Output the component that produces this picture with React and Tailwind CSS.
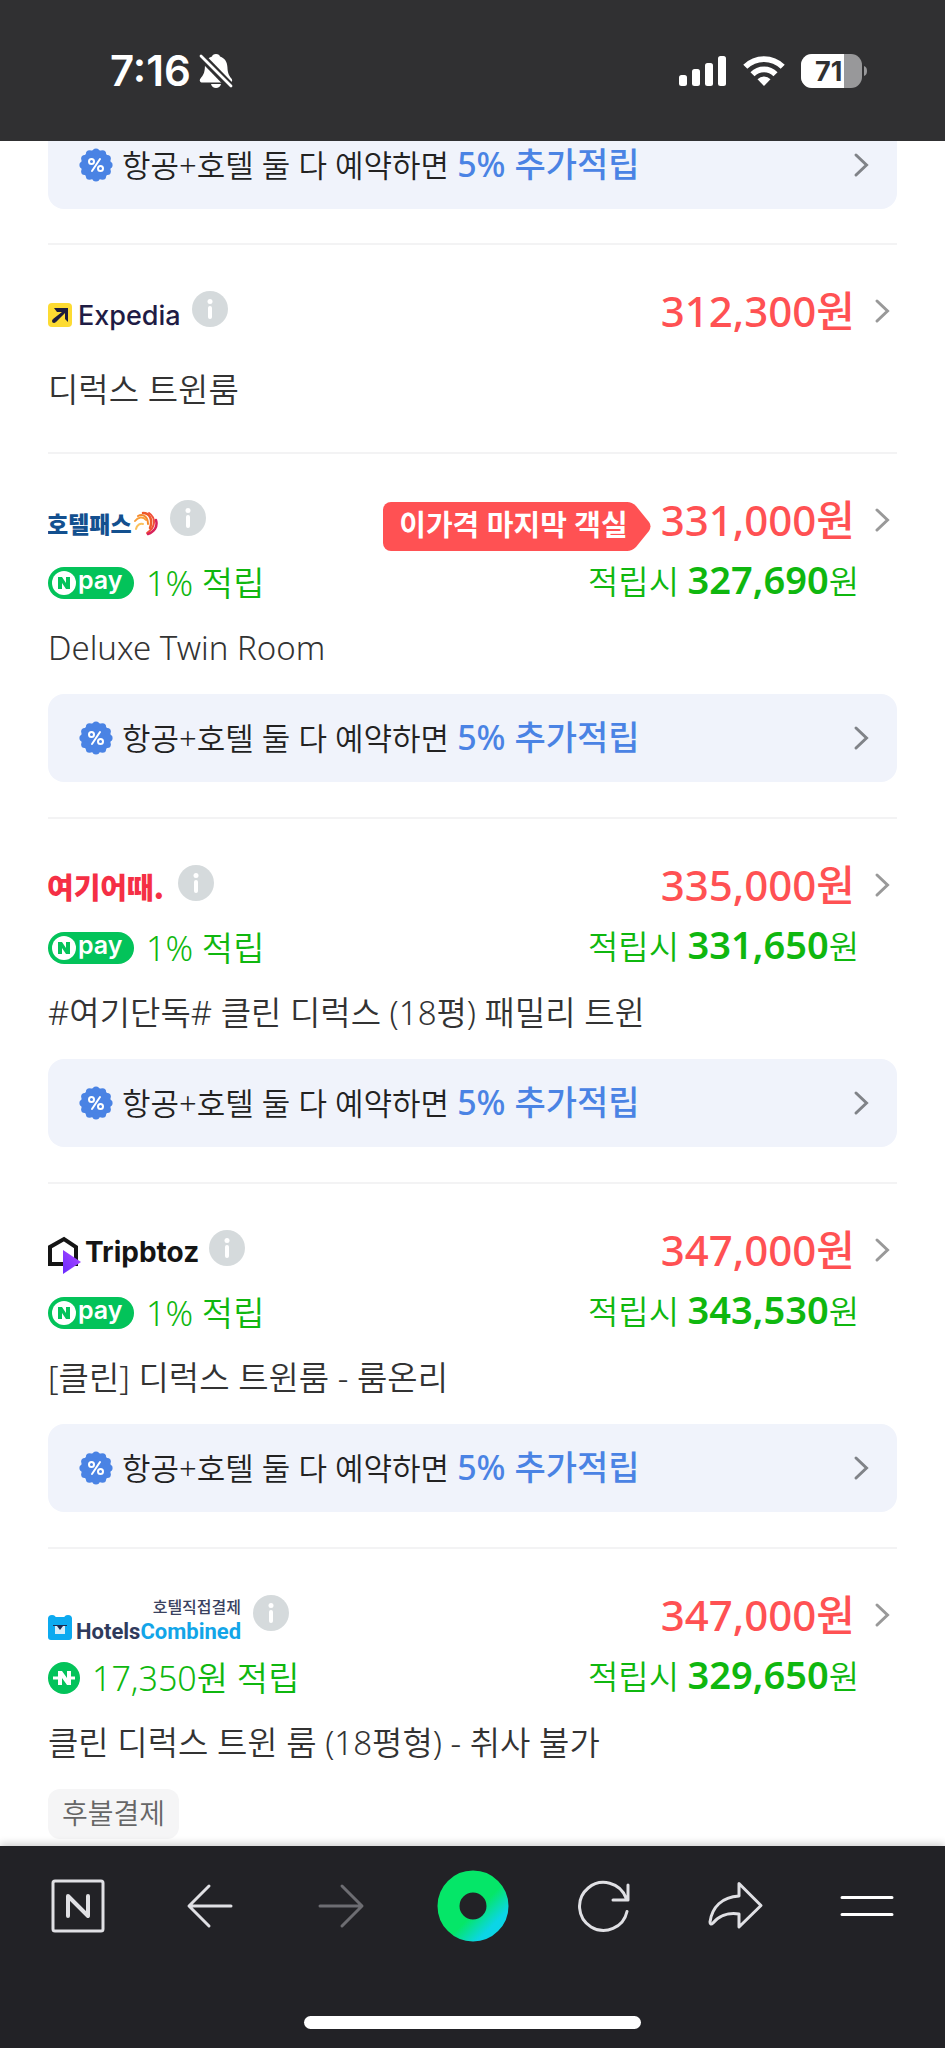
const offers = [
  {
    id: 'expedia',
    name: 'Expedia',
    logo: ExpediaLogo,
    price: '312,300',
    room: '디럭스 트윈룸',
  },
  {
    id: 'hotelpass',
    name: '호텔패스',
    logo: HotelpassLogo,
    price: '331,000',
    badge: '이가격 마지막 객실',
    reward: '1% 적립',
    rewardPrice: '327,690',
    room: 'Deluxe Twin Room',
    promo: true,
  },
  {
    id: 'yeogi',
    name: '여기어때',
    logo: YeogiLogo,
    price: '335,000',
    reward: '1% 적립',
    rewardPrice: '331,650',
    room: '#여기단독# 클린 디럭스 (18평) 패밀리 트윈',
    promo: true,
  },
  {
    id: 'tripbtoz',
    name: 'Tripbtoz',
    logo: TripbtozLogo,
    price: '347,000',
    reward: '1% 적립',
    rewardPrice: '343,530',
    room: '[클린] 디럭스 트윈룸 - 룸온리',
    promo: true,
  },
  {
    id: 'hotelscombined',
    name: 'HotelsCombined',
    logo: HotelsCombinedLogo,
    price: '347,000',
    reward: '17,350원 적립',
    rewardIcon: 'coin',
    rewardPrice: '329,650',
    room: '클린 디럭스 트윈 룸 (18평형) - 취사 불가',
    tag: '후불결제',
  },
];

function ExpediaLogo() {
  return (
    <svg width="132" height="60" viewBox="0 0 132 60" role="img" aria-label="Expedia">
      <rect x="0" y="22" width="24" height="24" rx="4" fill="#fddb32" />
      <path d="M6 27h14v14l-3-3v-6L8 41l-3-3 9-7H9z" fill="#1c1c3c" />
      <circle cx="6" cy="40" r="2" fill="#1c1c3c" />
      <text x="30" y="44" fontFamily="Inter, sans-serif" fontSize="27" fontWeight="500" fill="#1f1c45">
        Expedia
      </text>
    </svg>
  );
}

function HotelpassLogo() {
  return (
    <svg width="110" height="60" viewBox="0 0 110 60" role="img" aria-label="호텔패스">
      <text x="-1" y="43" fontFamily="'Noto Sans CJK KR', sans-serif" fontSize="23" fontWeight="900" fill="#13508f">
        호텔패스
      </text>
      <g fill="none" strokeLinecap="round">
        <path d="M87 31c3-4 8-5 11-1" stroke="#f9a03c" strokeWidth="2" />
        <path d="M90 26c5-3 10 1 10 8" stroke="#f58a2c" strokeWidth="2" />
        <path d="M95 23c7 0 10 7 7 15" stroke="#ee5a2a" strokeWidth="2.5" />
        <path d="M88 39c1-4 4-6 7-5" stroke="#fbc15b" strokeWidth="2" />
        <path d="M101 23c7 5 7 14-2 20" stroke="#f0503a" strokeWidth="2" />
        <path d="M108 30c2 7-2 12-8 14" stroke="#d8235a" strokeWidth="2.5" />
      </g>
    </svg>
  );
}

function YeogiLogo() {
  return (
    <svg width="118" height="60" viewBox="0 0 118 60" role="img" aria-label="여기어때">
      <text
        x="-1"
        y="44"
        fontFamily="'Noto Sans CJK KR', sans-serif"
        fontSize="29"
        fontWeight="900"
        fill="#f52f45"
      >
        여기어때.
      </text>
    </svg>
  );
}

function TripbtozLogo() {
  return (
    <svg width="149" height="60" viewBox="0 0 149 60" className="overflow-visible" role="img" aria-label="Tripbtoz">
      <defs>
        <linearGradient id="tripPlay" x1="0" y1="1" x2="1" y2="0">
          <stop offset="0" stopColor="#6a2bff" />
          <stop offset="1" stopColor="#b04bff" />
        </linearGradient>
      </defs>
      <path d="M2 44V27L16 19l12 8v17z" fill="none" stroke="#151515" strokeWidth="4" strokeLinejoin="miter" />
      <path d="M15 30l18 12-18 12z" fill="url(#tripPlay)" />
      <text x="37" y="42" fontFamily="Inter, sans-serif" fontSize="28" fontWeight="700" fill="#151515">
        Tripbtoz
      </text>
    </svg>
  );
}

function HotelsCombinedLogo() {
  return (
    <svg width="193" height="60" viewBox="0 0 193 60" role="img" aria-label="HotelsCombined 호텔직접결제">
      <text
        x="193"
        y="28"
        textAnchor="end"
        fontFamily="'Noto Sans CJK KR', sans-serif"
        fontSize="16"
        fontWeight="500"
        fill="#3a4260"
      >
        호텔직접결제
      </text>
      <circle cx="4" cy="34" r="4" fill="#0caaf0" />
      <circle cx="20" cy="34" r="4" fill="#0caaf0" />
      <rect x="0" y="32" width="24" height="23" rx="3" fill="#0caaf0" />
      <path d="M7 41h10v8H7z" fill="#d8eefa" />
      <path d="M5 40h14v1h-4l-3 4-3-4H5z" fill="#1c2b52" />
      <text x="28" y="54" fontFamily="Roboto, sans-serif" fontSize="22" fontWeight="700" fill="#2f3a5c">
        Hotels<tspan fill="#12a5e8">Combined</tspan>
      </text>
    </svg>
  );
}

function NpayBadge() {
  return (
    <svg width="86" height="32" viewBox="0 0 86 32" className="overflow-visible" role="img" aria-label="N pay">
      <rect width="86" height="32" rx="16" fill="#03c35a" />
      <circle cx="16" cy="16" r="12" fill="#fff" />
      <path d="M10 22V10h4l4 6v-6h4v12h-4l-4-6v6z" fill="#03c35a" />
      <text x="30" y="22" fontFamily="Inter, sans-serif" fontSize="25" fontWeight="600" fill="#fff">
        pay
      </text>
    </svg>
  );
}

function PointCoin() {
  return (
    <svg width="32" height="32" viewBox="0 0 32 32" aria-hidden="true">
      <circle cx="16" cy="16" r="16" fill="#03c35a" />
      <path d="M10 23V9h4l5 7V9h4v14h-4l-5-7v7z" fill="#fff" />
      <path d="M5 16h6M21 16h6" stroke="#fff" strokeWidth="3" />
    </svg>
  );
}

function Chevron({ className }) {
  return (
    <svg className={className} width="28" height="28" viewBox="0 0 28 28" fill="none" aria-hidden="true">
      <path d="M8 4l10.500 10L8 24" stroke="currentColor" strokeWidth="3" strokeLinecap="round" />
    </svg>
  );
}

function InfoButton({ name }) {
  return (
    <button type="button" aria-label={`${name} 정보`} className="mt-2.5 size-9 shrink-0">
      <svg width="36" height="36" viewBox="0 0 36 36">
        <circle cx="18" cy="18" r="18" fill="#d5dadc" />
        <circle cx="18" cy="10.500" r="2.500" fill="#fff" />
        <path d="M18 17v9" stroke="#fff" strokeWidth="4" strokeLinecap="round" />
      </svg>
    </button>
  );
}

// Scalloped disc: 12 small bumps set round a circle
function PercentSeal() {
  const bumps = Array.from({ length: 12 }, (_, i) => (i * Math.PI) / 6);
  return (
    <svg width="34" height="34" viewBox="0 0 34 34" className="shrink-0" aria-hidden="true">
      <g fill="#4a83e4">
        <circle cx="17" cy="17" r="15" />
        {bumps.map((a) => (
          <circle key={a} cx={17 + 13 * Math.cos(a)} cy={17 + 13 * Math.sin(a)} r="3.600" />
        ))}
      </g>
      <g fill="none" stroke="#fff" strokeWidth="2">
        <circle cx="12.500" cy="13.500" r="2.500" />
        <circle cx="21.500" cy="20.500" r="2.500" />
        <path d="M21 11l-8 12" strokeLinecap="round" />
      </g>
    </svg>
  );
}

function PromoBanner() {
  return (
    <a href="#promo" className="flex h-[88px] items-center rounded-2xl bg-[#f0f3fb] pl-[31px] pr-[21px]">
      <PercentSeal />
      <span className="ml-[9px] whitespace-nowrap pb-0.5 text-[31px] font-[350] leading-10 text-[#222]">
        항공+호텔 둘 다 예약하면{' '}
        <strong className="text-[34px] font-medium text-[#4a83e4]">5% 추가적립</strong>
      </span>
      <Chevron className="ml-auto shrink-0 text-[#808388]" />
    </a>
  );
}

function LastRoomBadge({ children }) {
  return (
    <span className="mt-3 flex h-[49px] items-center">
      <span className="h-full rounded-l-lg bg-[#ff5153] pl-4 text-[29px] font-bold leading-[46px] text-white">
        {children}
      </span>
      <svg width="24" height="49" viewBox="0 0 24 49" className="-ml-px" aria-hidden="true">
        <path d="M0 0q5 0 9 4l13 16q3 4 0 9L9 45q-4 4-9 4z" fill="#ff5153" />
      </svg>
    </span>
  );
}

function Offer({ offer }) {
  const Logo = offer.logo;
  return (
    <article className={offer.tag ? 'pt-9 pb-[7px]' : 'border-b-2 border-[#f3f3f4] pt-9 pb-[35px]'}>
      <div className="flex h-[60px] justify-between">
        <div className="flex items-start gap-3">
          <Logo />
          <InfoButton name={offer.name} />
        </div>
        <a href={`#${offer.id}`} className="flex items-center">
          {offer.badge && <LastRoomBadge>{offer.badge}</LastRoomBadge>}
          <span className="ml-2.5 text-[42px] font-medium leading-[60px] text-[#ff5153]">{offer.price}원</span>
          <Chevron className="ml-3.5 text-[#999]" />
        </a>
      </div>

      {offer.reward && (
        <div className="mt-1 flex h-[52px] items-center justify-between text-[#0fb70f]">
          <p className="flex items-center gap-3 pt-1.5 text-[34px] font-[350] leading-[46px]">
            {offer.rewardIcon === 'coin' ? <PointCoin /> : <NpayBadge />}
            {offer.reward}
          </p>
          <p className="pr-[38px] text-[33px] font-[350] leading-[52px]">
            적립시 <strong className="text-[38px] font-semibold">{offer.rewardPrice}</strong>원
          </p>
        </div>
      )}

      <h2
        className={
          offer.reward
            ? 'mt-[18px] text-[33px] font-[350] leading-[48px] text-[#333]'
            : 'mt-[25px] mb-[3px] text-[33px] font-[350] leading-[48px] text-[#333]'
        }
      >
        {offer.room}
      </h2>

      {offer.promo && (
        <div className="mt-[22px]">
          <PromoBanner />
        </div>
      )}
      {offer.tag && (
        <div className="mt-[22px] flex">
          <span className="h-[50px] rounded-xl bg-[#f5f5f6] px-[14px] text-[28px] font-[350] leading-[48px] text-[#666]">
            {offer.tag}
          </span>
        </div>
      )}
    </article>
  );
}

function StatusBar() {
  return (
    <header className="flex h-[141px] shrink-0 items-center justify-between bg-[#303032] pl-[110px] pr-[77px] text-white">
      <div className="flex items-center gap-2">
        <time className="font-[Inter,sans-serif] text-[42px] font-semibold leading-[48px]">7:16</time>
        <svg width="34" height="36" viewBox="0 0 34 36" aria-label="무음">
          <path
            d="M17 1c2.500 0 3.600 1.200 4 2.600 5 1.600 7.200 5.600 7.400 10.400.2 6 1.600 8.500 4 11.500 1.600 2.300.6 4-2 4H3.500c-2.600 0-3.500-1.800-2-4 2.600-3.300 4.200-5.500 4.400-11.500C6 9 8.300 5.200 13 3.600 13.400 2.200 14.500 1 17 1z"
            fill="currentColor"
          />
          <path d="M12 31h10c-.6 2.600-2.600 4-5 4s-4.400-1.400-5-4z" fill="currentColor" />
          <path d="M0 1l32 33" stroke="#303032" strokeWidth="8" />
          <path d="M2 3l30 30" stroke="currentColor" strokeWidth="2.800" strokeLinecap="round" />
        </svg>
      </div>
      <div className="flex items-center gap-4">
        <svg width="48" height="32" viewBox="0 0 48 32" fill="currentColor" aria-label="신호">
          <rect x="0" y="20" width="8" height="11" rx="2.500" />
          <rect x="13" y="14" width="8" height="17" rx="2.500" />
          <rect x="26" y="8" width="8" height="23" rx="2.500" />
          <rect x="39" y="1" width="8" height="30" rx="2.500" />
        </svg>
        <svg width="42" height="32" viewBox="0 0 42 32" aria-label="Wi-Fi">
          <g fill="none" stroke="currentColor" strokeWidth="5.800">
            <path d="M2.300 11.800a26.500 26.500 0 0 1 37.400 0" />
            <path d="M9.500 19.200a16.300 16.300 0 0 1 23 0" />
          </g>
          <path d="M14.500 24.300a9.200 9.200 0 0 1 13 0L21 31z" fill="currentColor" />
        </svg>
        <svg width="67" height="34" viewBox="0 0 67 34" aria-label="배터리 71%">
          <defs>
            <clipPath id="batteryBody">
              <rect width="61" height="34" rx="11" />
            </clipPath>
          </defs>
          <g clipPath="url(#batteryBody)">
            <rect width="61" height="34" fill="#98989a" />
            <rect width="43" height="34" fill="#fff" />
          </g>
          <path d="M63 12c4 1 4 9 0 10z" fill="#98989a" />
          <text x="14" y="27" fontFamily="Inter, sans-serif" fontSize="27" fontWeight="700" fill="#303032">
            71
          </text>
        </svg>
      </div>
    </header>
  );
}

function NavButton({ label, disabled, children }) {
  return (
    <button
      type="button"
      aria-label={label}
      disabled={disabled}
      className="flex size-[72px] items-center justify-center text-[#e0e0e4] disabled:text-[#6d6d72]"
    >
      {children}
    </button>
  );
}

function BottomNav() {
  const stroke = {
    width: 56,
    height: 56,
    viewBox: '0 0 56 56',
    fill: 'none',
    stroke: 'currentColor',
    strokeWidth: 3,
    strokeLinecap: 'round',
    strokeLinejoin: 'round',
  };
  return (
    <footer className="relative bg-[#222226] pt-6 pb-[19px] shadow-[0_-2px_8px_rgba(0,0,0,0.2)]">
      <nav className="flex justify-between px-[42px]">
        <NavButton label="네이버 홈">
          <svg {...stroke}>
            <rect x="3" y="3" width="50" height="50" rx="2" />
            <path d="M18 38V18l20 20V18" strokeWidth="4" />
          </svg>
        </NavButton>
        <NavButton label="뒤로">
          <svg {...stroke}>
            <path d="M49 28H8M27 8L7 28l20 20" />
          </svg>
        </NavButton>
        <NavButton label="앞으로" disabled>
          <svg {...stroke}>
            <path d="M7 28h41M29 8l20 20-20 20" />
          </svg>
        </NavButton>
        <NavButton label="그린닷">
          <svg width="72" height="72" viewBox="0 0 72 72">
            <defs>
              <linearGradient id="greenDot" x1="0.100" y1="0.100" x2="0.900" y2="0.900">
                <stop offset="0.600" stopColor="#05e668" />
                <stop offset="1" stopColor="#0bd5e6" />
              </linearGradient>
            </defs>
            <circle cx="36" cy="36" r="24.500" fill="none" stroke="url(#greenDot)" strokeWidth="22" />
          </svg>
        </NavButton>
        <NavButton label="새로고침">
          <svg {...stroke}>
            <path d="M51 33.500A24 24 0 1 1 50 20M52 7v15H37" />
          </svg>
        </NavButton>
        <NavButton label="공유">
          <svg {...stroke}>
            <path d="M31 5.500L53 27.500 31 49V36C19 34 10 39 5 45c-2 2-3 1-3-1C4 29 14 19 31 18z" />
          </svg>
        </NavButton>
        <NavButton label="메뉴">
          <svg {...stroke} stroke="#fff">
            <path d="M3 19.500h50M3 36.500h50" />
          </svg>
        </NavButton>
      </nav>
      <div className="mx-auto mt-[74px] h-[13px] w-[337px] rounded-full bg-white" />
    </footer>
  );
}

export default function App() {
  return (
    <div className="flex min-h-screen flex-col bg-white font-['Noto_Sans','Noto_Sans_CJK_KR',sans-serif]">
      <StatusBar />
      <main className="flex-1 overflow-hidden px-12">
        <div className="-mt-5 border-b-2 border-[#f3f3f4] pb-[34px]">
          <PromoBanner />
        </div>
        {offers.map((offer) => (
          <Offer key={offer.id} offer={offer} />
        ))}
      </main>
      <BottomNav />
    </div>
  );
}
